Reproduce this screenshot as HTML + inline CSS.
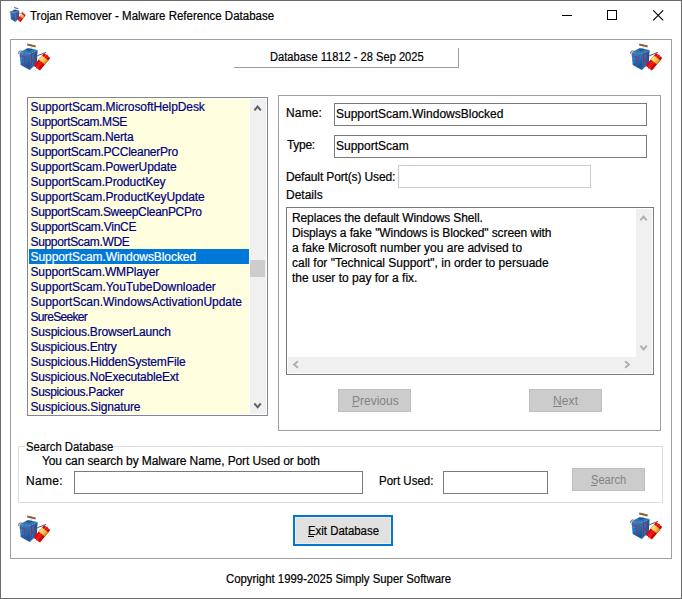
<!DOCTYPE html>
<html><head><meta charset="utf-8"><style>
html,body{margin:0;padding:0;width:682px;height:599px;overflow:hidden;background:#fff}
.t{position:absolute;font-family:"Liberation Sans",sans-serif;font-size:12px;line-height:15px;white-space:nowrap;-webkit-text-stroke:0.2px currentColor}
u{text-decoration:underline;text-underline-offset:2px}
</style></head><body>
<svg width="0" height="0" style="position:absolute">
<defs>
<linearGradient id="gL" x1="0" y1="0" x2="0.3" y2="1"><stop offset="0" stop-color="#3484d0"/><stop offset="0.6" stop-color="#1c6ab6"/><stop offset="1" stop-color="#12569c"/></linearGradient>
<linearGradient id="gR" x1="0" y1="0" x2="1" y2="0.3"><stop offset="0" stop-color="#1a64ae"/><stop offset="0.5" stop-color="#2370bc"/><stop offset="1" stop-color="#114f90"/></linearGradient>
<linearGradient id="gY" x1="0" y1="0" x2="0" y2="1"><stop offset="0" stop-color="#ffe67a"/><stop offset="0.6" stop-color="#f4c24a"/><stop offset="1" stop-color="#c88a20"/></linearGradient>
<linearGradient id="gRd" x1="0" y1="0" x2="0" y2="1"><stop offset="0" stop-color="#ff2020"/><stop offset="1" stop-color="#c00000"/></linearGradient>
<symbol id="ico" viewBox="0 0 34 32">
 <path d="M10.4 3.6 L18.8 5.6 L18.4 7.4 L10.1 5.4 Z" fill="#7a4e2a"/>
 <path d="M10.9 4.2 L13.7 4.9 L13.5 5.7 L10.7 5 Z M15.2 5.2 L18.2 5.9 L18 6.7 L15 6 Z" fill="#b08050"/>
 <rect x="14.1" y="6.6" width="1" height="2.9" fill="#d8d8d8"/>
 <path d="M2.4 12.6 L10.7 8 L20.6 9.9 L13.6 13.4 Z" fill="#2676c4"/>
 <path d="M8.5 9.6 L13 8.6 L16 9.6 L12 11 Z" fill="#1a3f66" opacity="0.6"/>
 <path d="M2.4 12.6 L13.6 13.4 L12.8 30 L3.7 25.1 Z" fill="url(#gL)"/>
 <path d="M13.6 13.4 L20.6 9.9 L19.8 23.5 L12.8 30 Z" fill="url(#gR)"/>
 <path d="M3.2 19 L5 18.6 M3.4 22 L5.4 21.8" stroke="#8cc0ee" stroke-width="0.6" opacity="0.7"/>
 <path d="M13.6 13.4 L12.8 30" stroke="#134e8c" stroke-width="0.5"/>
 <path d="M2.9 15.5 L10.4 17.6 M7.5 16.8 L7.5 26.7" stroke="#b82838" stroke-width="0.8" fill="none"/>
 <path d="M14.4 26.7 L14.4 13.9 Q18.6 12.2 18.4 17 Q18 19.6 15.2 19.8 L18.2 23.8" stroke="#b02030" stroke-width="0.8" fill="none"/>
 <path d="M1.3 13.8 Q1.6 10.6 3.6 10.9 L10.7 12.6 L11.5 14.6" stroke="#6e6e6e" stroke-width="1" fill="none"/>
 <path d="M20.3 15.8 L28.9 12.3" stroke="#4a4a4a" stroke-width="0.9" fill="none"/>
 <g transform="translate(25.2 21.5) rotate(-50)">
  <rect x="-8.8" y="-4" width="16.8" height="2.8" rx="1.3" fill="#e00808"/>
  <rect x="-9" y="-1.4" width="17.4" height="2.8" rx="1.3" fill="#f41010"/>
  <rect x="-8.6" y="1.2" width="16.6" height="2.8" rx="1.3" fill="#c80404"/>
  <rect x="-0.6" y="-4" width="5.2" height="8" fill="url(#gY)"/>
 </g>
</symbol>
</defs></svg>
<div style="position:absolute;left:0px;top:0px;width:682px;height:599px;box-sizing:border-box;border:1px solid #6a6a6a;background:#fff"></div><svg style="position:absolute;left:8.5px;top:5.3px" width="17" height="18" viewBox="0 0 34 32" preserveAspectRatio="none"><use href="#ico"/></svg><svg style="position:absolute;left:0;top:0" width="682" height="40"><rect x="562" y="15" width="10" height="1" fill="#000"/><rect x="607.5" y="10.5" width="9" height="9" fill="none" stroke="#000" stroke-width="1"/><path d="M653.2 10.3 L663.2 20.3 M663.2 10.3 L653.2 20.3" stroke="#000" stroke-width="1.1"/></svg><div style="position:absolute;left:10px;top:39px;width:662px;height:520px;box-sizing:border-box;border:1px solid #a0a0a0"></div><svg style="position:absolute;left:17px;top:40px" width="34.0" height="32.0"><use href="#ico"/></svg><svg style="position:absolute;left:629px;top:40px" width="34.0" height="32.0"><use href="#ico"/></svg><svg style="position:absolute;left:17px;top:512px" width="34.0" height="32.0"><use href="#ico"/></svg><svg style="position:absolute;left:629px;top:509px" width="34.0" height="32.0"><use href="#ico"/></svg><div style="position:absolute;left:234px;top:48px;width:225px;height:20px;box-sizing:border-box;border-right:1px solid #a0a0a0;border-bottom:1px solid #a0a0a0"></div><div style="position:absolute;left:27px;top:97px;width:241px;height:319px;box-sizing:border-box;border:1px solid #828790;background:#fff"></div><div style="position:absolute;left:29px;top:99px;width:220px;height:315px;box-sizing:border-box;background:#ffffe0"></div><div style="position:absolute;left:29px;top:249px;width:220px;height:15px;box-sizing:border-box;background:#0078d7"></div><div style="position:absolute;left:250px;top:99px;width:16px;height:315px;box-sizing:border-box;background:#f0f0f0"></div><div style="position:absolute;left:250px;top:260px;width:15px;height:17px;box-sizing:border-box;background:#cdcdcd"></div><div style="position:absolute;left:278px;top:95px;width:383px;height:336px;box-sizing:border-box;border:1px solid #a0a0a0"></div><div style="position:absolute;left:334px;top:103px;width:313px;height:23px;box-sizing:border-box;border:1px solid #7a7a7a"></div><div style="position:absolute;left:334px;top:135px;width:313px;height:23px;box-sizing:border-box;border:1px solid #7a7a7a"></div><div style="position:absolute;left:398px;top:165px;width:193px;height:23px;box-sizing:border-box;border:1px solid #cccccc"></div><div style="position:absolute;left:286px;top:207px;width:368px;height:168px;box-sizing:border-box;border:1px solid #7a7a7a;background:#fff"></div><div style="position:absolute;left:636px;top:209px;width:16px;height:164px;box-sizing:border-box;background:#f0f0f0"></div><div style="position:absolute;left:288px;top:357px;width:364px;height:16px;box-sizing:border-box;background:#f0f0f0"></div><div style="position:absolute;left:338px;top:389px;width:73px;height:23px;box-sizing:border-box;border:1px solid #bfbfbf;background:#cccccc"></div><div style="position:absolute;left:529px;top:389px;width:73px;height:23px;box-sizing:border-box;border:1px solid #bfbfbf;background:#cccccc"></div><div style="position:absolute;left:18px;top:446px;width:645px;height:57px;box-sizing:border-box;border:1px solid #dcdcdc"></div><div style="position:absolute;left:25px;top:444px;width:88px;height:5px;box-sizing:border-box;background:#fff"></div><div style="position:absolute;left:74px;top:471px;width:289px;height:23px;box-sizing:border-box;border:1px solid #7a7a7a"></div><div style="position:absolute;left:443px;top:471px;width:105px;height:23px;box-sizing:border-box;border:1px solid #7a7a7a"></div><div style="position:absolute;left:572px;top:468px;width:73px;height:23px;box-sizing:border-box;border:1px solid #bfbfbf;background:#cccccc"></div><div style="position:absolute;left:293px;top:515px;width:100px;height:31px;box-sizing:border-box;border:2px solid #0078d7;background:#e1e1e1"></div><div style="position:absolute;left:295px;top:517px;width:96px;height:27px;box-sizing:border-box;border:1px solid #f3ebe4"></div>
<svg style="position:absolute;left:0;top:0" width="682" height="599"><path d="M254.40000000000003 110.30000000000001 L257.6 106.5 L260.8 110.30000000000001" stroke="#606060" stroke-width="2" fill="none"/><path d="M254.40000000000003 403.5 L257.6 407.29999999999995 L260.8 403.5" stroke="#606060" stroke-width="2" fill="none"/><path d="M640.3 220.4 L643.5 216.6 L646.7 220.4" stroke="#b0b0b0" stroke-width="2" fill="none"/><path d="M640.4 345.70000000000005 L643.6 349.5 L646.8000000000001 345.70000000000005" stroke="#b0b0b0" stroke-width="2" fill="none"/><path d="M297.9 361.3 L294.1 364.5 L297.9 367.7" stroke="#b0b0b0" stroke-width="2" fill="none"/><path d="M625.1 361.3 L628.9 364.5 L625.1 367.7" stroke="#b0b0b0" stroke-width="2" fill="none"/></svg><div style="position:absolute;left:352px;top:406px;width:7px;height:1px;box-sizing:border-box;background:#838383"></div><div style="position:absolute;left:553px;top:406px;width:9px;height:1px;box-sizing:border-box;background:#838383"></div><div style="position:absolute;left:591px;top:485px;width:6px;height:1px;box-sizing:border-box;background:#838383"></div><div style="position:absolute;left:308px;top:536px;width:6px;height:1px;box-sizing:border-box;background:#000"></div>
<div class="t" id="t0" style="left:30px;top:9px;color:#000;letter-spacing:0px;transform:scaleX(0.957);transform-origin:0 0;">Trojan Remover - Malware Reference Database</div><div class="t" id="t1" style="left:270px;top:50px;color:#000;letter-spacing:0px;transform:scaleX(0.926);transform-origin:0 0;">Database 11812 - 28 Sep 2025</div><div class="t" id="t2" style="left:30.5px;top:100px;color:#000080;letter-spacing:-0.086px;">SupportScam.MicrosoftHelpDesk</div><div class="t" id="t3" style="left:30.5px;top:115px;color:#000080;letter-spacing:-0.371px;">SupportScam.MSE</div><div class="t" id="t4" style="left:30.5px;top:130px;color:#000080;letter-spacing:-0.137px;">SupportScam.Nerta</div><div class="t" id="t5" style="left:30.5px;top:145px;color:#000080;letter-spacing:-0.248px;">SupportScam.PCCleanerPro</div><div class="t" id="t6" style="left:30.5px;top:160px;color:#000080;letter-spacing:-0.114px;">SupportScam.PowerUpdate</div><div class="t" id="t7" style="left:30.5px;top:175px;color:#000080;letter-spacing:-0.143px;">SupportScam.ProductKey</div><div class="t" id="t8" style="left:30.5px;top:190px;color:#000080;letter-spacing:-0.093px;">SupportScam.ProductKeyUpdate</div><div class="t" id="t9" style="left:30.5px;top:205px;color:#000080;letter-spacing:-0.304px;">SupportScam.SweepCleanPCPro</div><div class="t" id="t10" style="left:30.5px;top:220px;color:#000080;letter-spacing:-0.238px;">SupportScam.VinCE</div><div class="t" id="t11" style="left:30.5px;top:235px;color:#000080;letter-spacing:-0.336px;">SupportScam.WDE</div><div class="t" id="t12" style="left:30.5px;top:250px;color:#fff;letter-spacing:-0.072px;">SupportScam.WindowsBlocked</div><div class="t" id="t13" style="left:30.5px;top:265px;color:#000080;letter-spacing:-0.137px;">SupportScam.WMPlayer</div><div class="t" id="t14" style="left:30.5px;top:280px;color:#000080;letter-spacing:-0.068px;">SupportScam.YouTubeDownloader</div><div class="t" id="t15" style="left:30.5px;top:295px;color:#000080;letter-spacing:-0.018px;">SupportScan.WindowsActivationUpdate</div><div class="t" id="t16" style="left:30.5px;top:310px;color:#000080;letter-spacing:-0.667px;">SureSeeker</div><div class="t" id="t17" style="left:30.5px;top:325px;color:#000080;letter-spacing:-0.183px;">Suspicious.BrowserLaunch</div><div class="t" id="t18" style="left:30.5px;top:340px;color:#000080;letter-spacing:-0.2px;">Suspicious.Entry</div><div class="t" id="t19" style="left:30.5px;top:355px;color:#000080;letter-spacing:-0.138px;">Suspicious.HiddenSystemFile</div><div class="t" id="t20" style="left:30.5px;top:370px;color:#000080;letter-spacing:-0.2px;">Suspicious.NoExecutableExt</div><div class="t" id="t21" style="left:30.5px;top:385px;color:#000080;letter-spacing:-0.331px;">Suspicious.Packer</div><div class="t" id="t22" style="left:30.5px;top:400px;color:#000080;letter-spacing:-0.142px;">Suspicious.Signature</div><div class="t" id="t23" style="left:286px;top:106px;color:#000;letter-spacing:0.15px;">Name:</div><div class="t" id="t24" style="left:336px;top:107px;color:#000;letter-spacing:0px;">SupportScam.WindowsBlocked</div><div class="t" id="t25" style="left:287px;top:138px;color:#000;letter-spacing:-0.3px;">Type:</div><div class="t" id="t26" style="left:336px;top:139px;color:#000;letter-spacing:0px;">SupportScam</div><div class="t" id="t27" style="left:286px;top:170px;color:#000;letter-spacing:-0.135px;">Default Port(s) Used:</div><div class="t" id="t28" style="left:286px;top:188px;color:#000;letter-spacing:0px;">Details</div><div class="t" id="t29" style="left:292px;top:211px;color:#000;letter-spacing:-0.118px;">Replaces the default Windows Shell.</div><div class="t" id="t30" style="left:292px;top:226px;color:#000;letter-spacing:-0.096px;">Displays a fake &quot;Windows is Blocked&quot; screen with</div><div class="t" id="t31" style="left:292px;top:241px;color:#000;letter-spacing:0px;">a fake Microsoft number you are advised to</div><div class="t" id="t32" style="left:292px;top:256px;color:#000;letter-spacing:0px;">call for &quot;Technical Support&quot;, in order to persuade</div><div class="t" id="t33" style="left:292px;top:271px;color:#000;letter-spacing:0px;">the user to pay for a fix.</div><div class="t" id="t34" style="left:352px;top:394px;color:#838383;letter-spacing:0px;-webkit-text-stroke:0;">Previous</div><div class="t" id="t35" style="left:553px;top:394px;color:#838383;letter-spacing:0.13px;-webkit-text-stroke:0;">Next</div><div class="t" id="t36" style="left:26px;top:440px;color:#000;letter-spacing:0px;transform:scaleX(0.94);transform-origin:0 0;">Search Database</div><div class="t" id="t37" style="left:42px;top:454px;color:#000;letter-spacing:-0.104px;">You can search by Malware Name, Port Used or both</div><div class="t" id="t38" style="left:26px;top:474px;color:#000;letter-spacing:0.3px;">Name:</div><div class="t" id="t39" style="left:379px;top:474px;color:#000;letter-spacing:0px;transform:scaleX(0.961);transform-origin:0 0;">Port Used:</div><div class="t" id="t40" style="left:591px;top:473px;color:#838383;letter-spacing:0px;transform:scaleX(0.925);transform-origin:0 0;-webkit-text-stroke:0;">Search</div><div class="t" id="t41" style="left:308px;top:524px;color:#000;letter-spacing:0px;transform:scaleX(0.95);transform-origin:0 0;">Exit Database</div><div class="t" id="t42" style="left:226px;top:572px;color:#000;letter-spacing:0px;transform:scaleX(0.948);transform-origin:0 0;">Copyright 1999-2025 Simply Super Software</div>
</body></html>
